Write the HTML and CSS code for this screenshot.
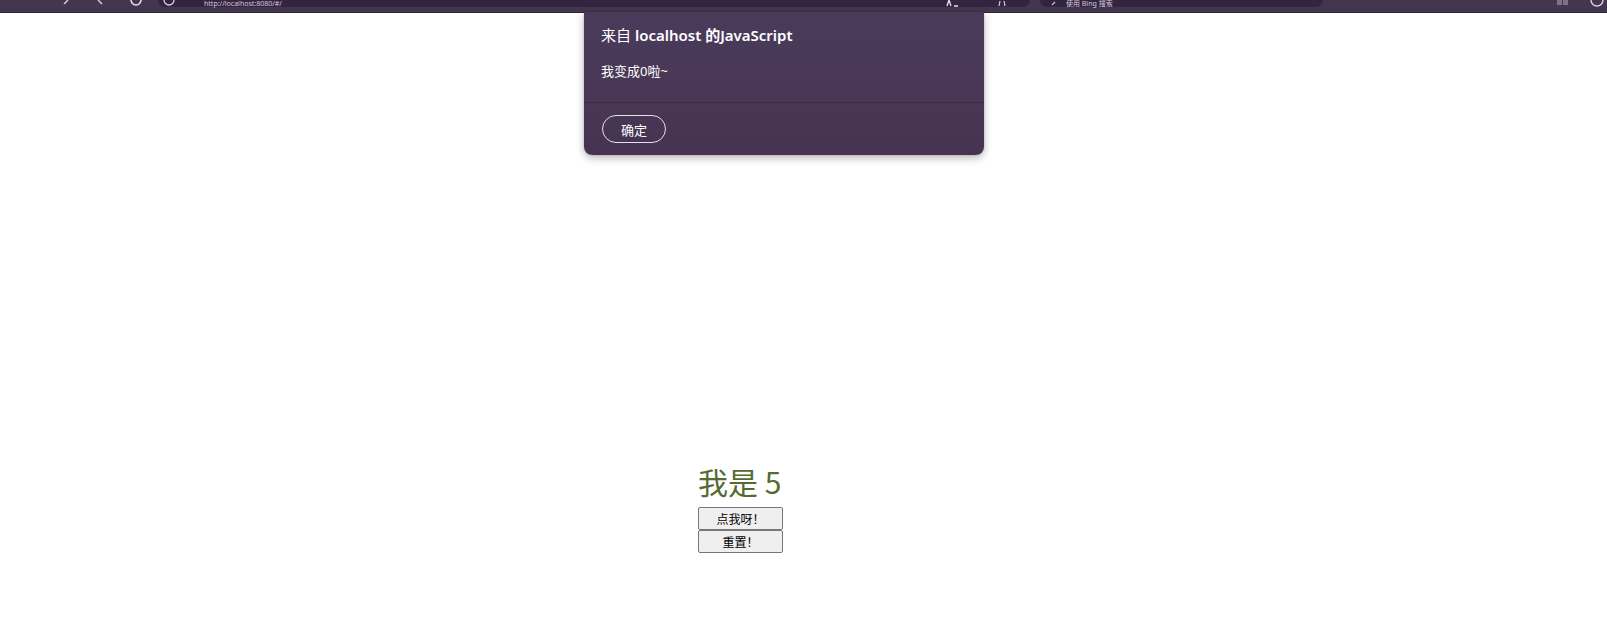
FILE: index.html
```html
<!DOCTYPE html>
<html lang="zh">
<head>
<meta charset="utf-8">
<title>demo</title>
<link rel="stylesheet" href="styles.css">
</head>
<body>
<header class="toolbar">
  <svg class="ico i-back" width="12" height="8" viewBox="0 0 12 8"><path d="M6 0 L2 4" stroke="#d8d0e0" stroke-width="1.4" fill="none"/></svg>
  <svg class="ico i-fwd" width="12" height="8" viewBox="0 0 12 8"><path d="M4 0 L8 4" stroke="#d8d0e0" stroke-width="1.4" fill="none"/></svg>
  <svg class="ico i-reload" width="14" height="8" viewBox="0 0 14 8"><path d="M2 0 A5 5 0 0 0 12 0" stroke="#e8e0ee" stroke-width="1.6" fill="none"/></svg>
  <div class="pill address">
    <svg class="ico i-info" width="12" height="8" viewBox="0 0 12 8"><path d="M1 0 A5 5 0 0 0 11 0" stroke="#d8d0e0" stroke-width="1.3" fill="none"/></svg>
    <span class="url">http://localhost:8080/#/</span>
    <svg class="ico i-a" width="14" height="8" viewBox="0 0 14 8"><path d="M1 6 L3 0 M5 6 L3 0 M8 6 L12 6" stroke="#e8e0ee" stroke-width="1.3" fill="none"/></svg>
    <svg class="ico i-star" width="12" height="8" viewBox="0 0 12 8"><path d="M3 6 L4 1 M9 6 L8 1" stroke="#d8d0e0" stroke-width="1.2" fill="none"/></svg>
  </div>
  <div class="pill search">
    <svg class="ico i-search" width="10" height="8" viewBox="0 0 10 8"><path d="M2 5 L5 2" stroke="#c9bfd3" stroke-width="1.2" fill="none"/></svg>
    <span class="url">使用 Bing 搜索</span>
  </div>
  <svg class="ico i-ext" width="14" height="8" viewBox="0 0 14 8"><rect x="1" y="0" width="5" height="5" fill="#7d7288"/><rect x="7" y="0" width="5" height="5" fill="#7d7288"/></svg>
  <svg class="ico i-prof" width="14" height="8" viewBox="0 0 14 8"><path d="M1 0 A6 6 0 0 0 13 0" stroke="#d8d0e0" stroke-width="1.4" fill="none"/></svg>
</header>

<main class="page">
  <div class="counter">
    <h1 class="count">我是 5</h1>
    <button class="btn">点我呀！</button>
    <button class="btn">重置！</button>
  </div>
</main>

<div class="dialog" role="alertdialog">
  <div class="dialog-body">
    <div class="dialog-title">来自 <b>localhost 的JavaScript</b></div>
    <div class="dialog-msg">我变成0啦~</div>
  </div>
  <div class="dialog-foot">
    <button class="ok">确定</button>
  </div>
</div>
</body>
</html>
```

FILE: styles.css
```css
html, body {
  margin: 0;
  padding: 0;
  background: #ffffff;
  font-family: "Noto Sans", "Noto Sans CJK SC", sans-serif;
}

.toolbar {
  position: relative;
  height: 12px;
  background: #45364f;
  border-bottom: 1px solid #2f2338;
  overflow: hidden;
}

.ico {
  position: absolute;
  top: 0;
  display: block;
}
.i-back { left: 62px; }
.i-fwd { left: 94px; }
.i-reload { left: 129px; }
.i-ext { left: 1556px; }
.i-prof { left: 1590px; }

.pill {
  position: absolute;
  top: 0;
  height: 7px;
  background: #33243f;
  border-radius: 0 0 8px 8px;
}
.address { left: 158px; width: 872px; }
.search { left: 1040px; width: 283px; }

.pill .url {
  position: absolute;
  top: 0;
  font-size: 7px;
  line-height: 7px;
  color: #d4cadd;
  white-space: nowrap;
}
.address .url { left: 46px; }
.search .url { left: 26px; }
.i-info { left: 5px; }
.i-a { left: 788px; }
.i-star { left: 838px; }
.i-search { left: 10px; }

.page {
  display: flex;
  padding: 444px 0 0 698px;
}

.counter {
  display: flex;
  flex-direction: column;
  align-items: flex-start;
}

.count {
  margin: 0 0 2px 0;
  font-size: 30px;
  font-weight: normal;
  line-height: 48px;
  height: 48px;
  color: #556b2f;
  font-family: "Noto Sans CJK SC", "Noto Sans", sans-serif;
}

.btn {
  width: 85px;
  height: 23px;
  margin: 0;
  padding: 0;
  font-size: 12px;
  line-height: 20px;
  font-weight: 400;
  font-family: "Noto Sans CJK SC", "Noto Sans", sans-serif;
  color: #000;
  background: #efefef;
  border: 1px solid #767676;
  border-radius: 2px;
}

.dialog {
  position: absolute;
  left: 584px;
  top: 12px;
  width: 400px;
  background: linear-gradient(#4b3b5b, #453451);
  border-radius: 0 0 8px 8px;
  box-shadow: 0 3px 8px rgba(0, 0, 0, 0.28), 0 0 2px rgba(0, 0, 0, 0.2);
  color: #ffffff;
}

.dialog-body {
  padding: 12px 17px 0 17px;
  height: 78px;
  border-bottom: 1px solid #3b2c47;
}

.dialog-title {
  font-size: 15px;
  line-height: 22px;
  font-weight: 400;
}
.dialog-title b { font-weight: 600; }

.dialog-msg {
  margin-top: 16px;
  font-size: 13px;
  line-height: 18px;
}

.dialog-foot {
  padding: 12px 18px 12px 18px;
  display: flex;
}

.ok {
  width: 64px;
  height: 28px;
  padding: 0;
  background: transparent;
  color: #ffffff;
  border: 1px solid #e6e0ec;
  border-radius: 14px;
  font-size: 13px;
  font-family: "Noto Sans CJK SC", "Noto Sans", sans-serif;
  font-weight: 400;
}
```
